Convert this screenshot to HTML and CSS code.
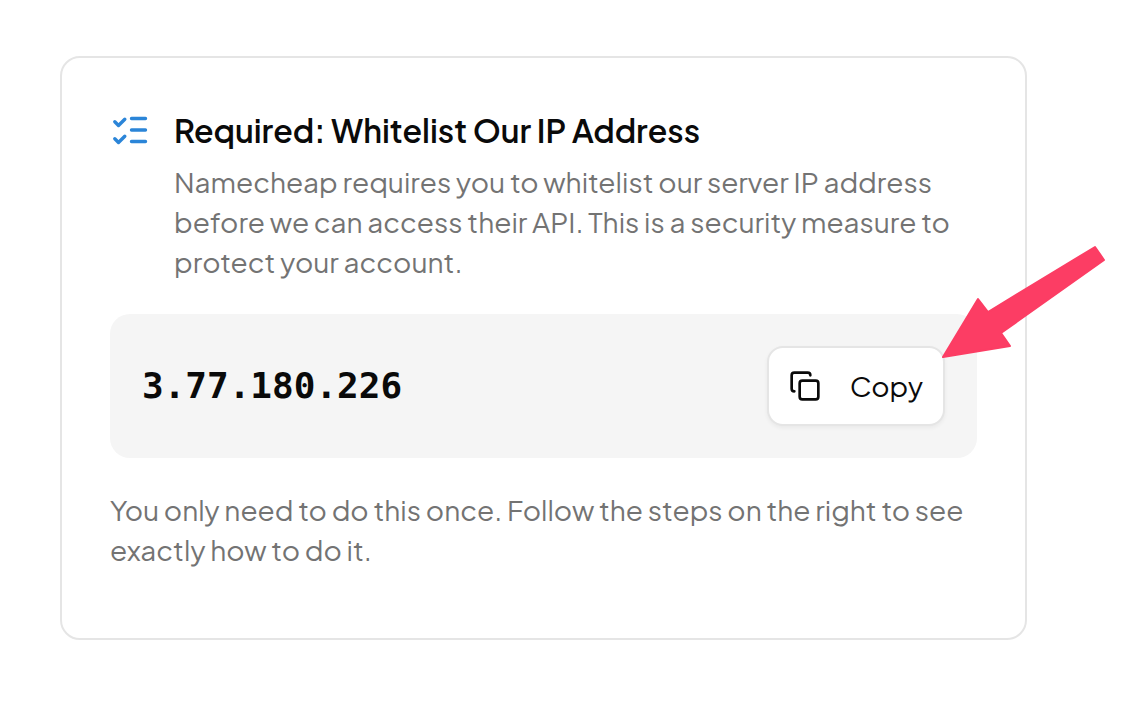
FILE: index.html
```html
<!DOCTYPE html>
<html lang="en">
<head>
    <meta charset="UTF-8">
    <title>Whitelist Our IP Address</title>
    <link rel="stylesheet" href="styles.css">
</head>
<body>
    <main class="card">
        <div class="card-header">
            <svg class="list-icon" viewBox="0 0 40 40" aria-hidden="true">
                <path d="M21.5 8.5h14M21.5 20h14M21.5 31.500h14" />
                <path d="M4.800 11.800l3.700 3.700 6.300-6.300M4.800 28.800l3.700 3.700 6.300-6.300" />
            </svg>
            <div class="card-heading">
                <h1>Required: Whitelist Our IP Address</h1>
                <p>Namecheap requires you to whitelist our server IP address before we can access their API. This is a security measure to protect your account.</p>
            </div>
        </div>

        <div class="ip-box">
            <code class="ip-address">3.77.180.226</code>
            <div class="copy-wrap">
                <button type="button" class="copy-btn">
                    <svg class="copy-icon" viewBox="0 0 24 24" aria-hidden="true">
                        <rect x="8" y="8" width="14" height="14" rx="2" />
                        <path d="M4 16c-1.100 0-2-.9-2-2V4c0-1.100.9-2 2-2h10c1.100 0 2 .9 2 2" />
                    </svg>
                    Copy
                </button>
                <svg class="arrow" viewBox="0 0 164 114" aria-hidden="true">
                    <path d="M2 112L37 54L47 67L154 2L163 15L60 88L69 101Z" />
                </svg>
            </div>
        </div>

        <p class="note">You only need to do this once. Follow the steps on the right to see exactly how to do it.</p>
    </main>
</body>
</html>
```
FILE: styles.css
```css
* {
    box-sizing: border-box;
}

body {
    font-family: "Plus Jakarta Sans", "Lato", sans-serif;
    font-size: 28px;
    line-height: 40px;
    background-color: #fff;
    color: #0a0a0a;
    margin: 0;
}

.card {
    margin: 56px 114px 56px 60px;
    padding: 48px 48px 68px;
    border: 2px solid #e5e5e5;
    border-radius: 20px;
}

.card-header {
    display: flex;
    gap: 24px;
}

.list-icon {
    flex: none;
    width: 40px;
    height: 40px;
    margin-top: 4px;
    fill: none;
    stroke: #2b85d8;
    stroke-width: 3.4;
    stroke-linecap: round;
    stroke-linejoin: round;
}

h1 {
    font-size: 32px;
    font-weight: 600;
    line-height: 48px;
    margin: 0 0 8px;
}

p {
    color: #737373;
    margin: 0;
}

.ip-box {
    display: flex;
    align-items: center;
    justify-content: space-between;
    margin: 32px 0;
    padding: 32px;
    background-color: #f5f5f5;
    border-radius: 20px;
}

.ip-address {
    font-family: "DejaVu Sans Mono", monospace;
    font-size: 36px;
    font-weight: bold;
}

.copy-wrap {
    position: relative;
}

.copy-btn {
    display: flex;
    align-items: center;
    gap: 29px;
    height: 80px;
    padding: 0 20px;
    font: inherit;
    color: #0a0a0a;
    background-color: #fff;
    border: 2px solid #e5e5e5;
    border-radius: 16px;
    box-shadow: 0 2px 4px rgba(0, 0, 0, 0.05);
    cursor: pointer;
}

.copy-icon {
    width: 32px;
    height: 32px;
    fill: none;
    stroke: currentColor;
    stroke-width: 2;
    stroke-linecap: round;
    stroke-linejoin: round;
}

/* Pointer that sits over the corner of the copy button */
.arrow {
    position: absolute;
    left: 100%;
    bottom: 67px;
    width: 164px;
    height: 114px;
    margin-left: -4px;
    fill: #fc3d64;
    stroke: #fc3d64;
    stroke-width: 2;
    stroke-linejoin: round;
    pointer-events: none;
}
```
